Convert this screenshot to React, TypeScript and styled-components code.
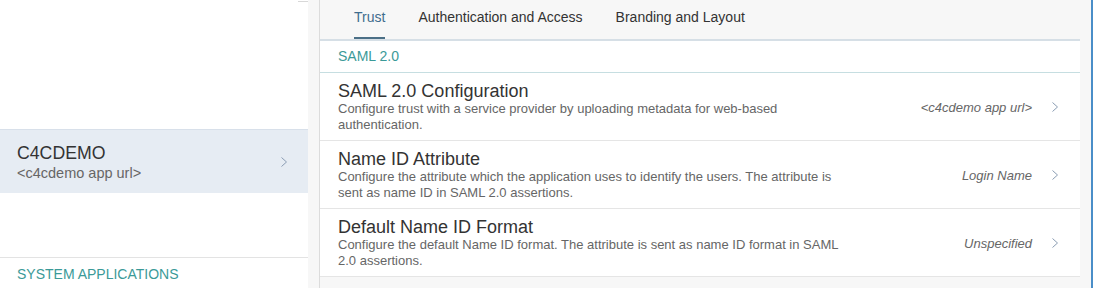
import styled, { createGlobalStyle } from "styled-components";

// 🔹 trust settings page
const GlobalStyle = createGlobalStyle`
html, body {
  margin:0;
  padding:0;
  background:#f7f7f7;
  font-family:"Liberation Sans", Arial, sans-serif;
}
`;

const colors = {
  text: "#333333",
  sub: "#666666",
  teal: "#3b9a98",
  tabActive: "#3f6d8e",
  line: "#e5e5e5",
  chevron: "#8a9db3",
};

type Setting = { title: string; desc: string; value: string };

const settings: Setting[] = [
  {
    title: "SAML 2.0 Configuration",
    desc: "Configure trust with a service provider by uploading metadata for web-based authentication.",
    value: "<c4cdemo app url>",
  },
  {
    title: "Name ID Attribute",
    desc: "Configure the attribute which the application uses to identify the users. The attribute is sent as name ID in SAML 2.0 assertions.",
    value: "Login Name",
  },
  {
    title: "Default Name ID Format",
    desc: "Configure the default Name ID format. The attribute is sent as name ID format in SAML 2.0 assertions.",
    value: "Unspecified",
  },
];

const tabs = ["Trust", "Authentication and Access", "Branding and Layout"];

const Chevron = () => (
  <svg width="6" height="10" viewBox="0 0 6 10" fill="none">
    <polyline points="0.5,0.5 5.5,5 0.5,9.5" stroke={colors.chevron} strokeWidth="1" />
  </svg>
);

export default function App() {
  return (
    <>
      <GlobalStyle />
      <StyleWrap>
        <Sidebar>
          <ScrollTick />
          <AppItem>
            <div className="info">
              <span className="name">C4CDEMO</span>
              <span className="url">&lt;c4cdemo app url&gt;</span>
            </div>
            <Chevron />
          </AppItem>
          <SectionLabel>SYSTEM APPLICATIONS</SectionLabel>
        </Sidebar>

        <Main>
          <TabBar>
            {tabs.map((t, i) => (
              <Tab key={t} $active={i === 0}>{t}</Tab>
            ))}
          </TabBar>
          <GroupHeader>SAML 2.0</GroupHeader>
          {settings.map((s) => (
            <Row key={s.title}>
              <div className="text">
                <div className="title">{s.title}</div>
                <div className="desc">{s.desc}</div>
              </div>
              <span className="value">{s.value}</span>
              <Chevron />
            </Row>
          ))}
        </Main>
      </StyleWrap>
    </>
  );
}

const StyleWrap = styled.div`
display:flex;
width:1093px;
height:288px;
box-sizing:border-box;
border-right:2px solid #4a8ec8;
overflow:hidden;
`;

const Sidebar = styled.aside`
display:flex;
flex-direction:column;
width:308px;
height:288px;
background:#fff;
`;

const ScrollTick = styled.div`
align-self:flex-end;
width:10px;
height:1px;
margin-top:1px;
background:#d8d8d8;
`;

const AppItem = styled.div`
display:flex;
align-items:center;
height:64px;
margin-top:127px;
padding:0 21px 0 17px;
box-sizing:border-box;
border-top:1px solid #d8e0ea;
background:#e6ecf3;
.info {
  display:flex;
  flex:1;
  flex-direction:column;
  padding-top:2px;
}
.name {
  font-size:17.7px;
  line-height:20px;
  color:${colors.text};
}
.url {
  font-size:14.5px;
  line-height:20px;
  color:${colors.sub};
}
`;

const SectionLabel = styled.div`
margin-top:auto;
padding:8px 17px 6px;
border-top:1px solid #e3e3e3;
font-size:14px;
line-height:16px;
color:${colors.teal};
`;

const Main = styled.main`
display:flex;
flex-direction:column;
width:761px;
margin:0 11px;
border-left:1px solid #dcdcdc;
box-sizing:border-box;
`;

const TabBar = styled.nav`
display:flex;
gap:33px;
height:41px;
padding-left:34px;
box-sizing:border-box;
border-bottom:2px solid #d6dfe6;
background:#f7f7f7;
`;

const Tab = styled.div<{ $active?: boolean }>`
height:39px;
padding-top:9px;
box-sizing:border-box;
font-size:14px;
line-height:16px;
color:${(p) => (p.$active ? colors.tabActive : colors.text)};
box-shadow:${(p) => (p.$active ? `inset 0 -2px 0 #4b6f86` : "none")};
`;

const GroupHeader = styled.div`
height:32px;
padding:7px 18px 0;
box-sizing:border-box;
border-bottom:1px solid #c6dee1;
background:#fff;
font-size:14px;
line-height:16px;
color:${colors.teal};
`;

const Row = styled.div`
display:flex;
align-items:center;
padding:8px 22px 7px 18px;
border-bottom:1px solid ${colors.line};
background:#fff;
.text {
  flex:1;
}
.title {
  font-size:18px;
  line-height:20px;
  color:${colors.text};
}
.desc {
  max-width:508px;
  font-size:13px;
  line-height:16px;
  color:#666;
}
.value {
  margin-right:20px;
  font-size:13px;
  font-style:italic;
  color:${colors.sub};
}
`;
